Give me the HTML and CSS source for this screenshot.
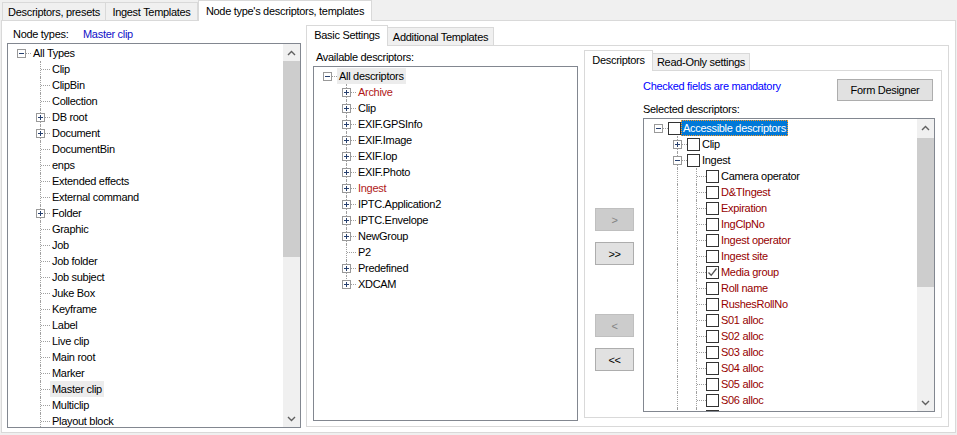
FILE: index.html
```html
<!DOCTYPE html>
<html>
<head>
<meta charset="utf-8">
<link rel="stylesheet" href="styles.css">
</head>
<body>
<div class="win">
  <div class="tabs">
    <div class="tab t1">Descriptors, presets</div>
    <div class="tab t2">Ingest Templates</div>
    <div class="tab t3 active">Node type's descriptors, templates</div>
  </div>
  <div class="page">
    <div class="left">
      <div class="nt-row"><span class="nt-lbl">Node types:</span><span class="blue">Master clip</span></div>
      <div class="tree ltree">
        <div class="tbody">
          <div class="row"><span class="c r"><svg class="ex" width="9" height="9"><rect x="0.5" y="0.5" width="8" height="8" fill="#fff" stroke="#999"/><path d="M2 4.5h5" stroke="#27406f"/></svg></span><span class="tx">All Types</span></div>
          <div class="row"><span class="c"></span><span class="c j"></span><span class="tx">Clip</span></div>
          <div class="row"><span class="c"></span><span class="c j"></span><span class="tx">ClipBin</span></div>
          <div class="row"><span class="c"></span><span class="c j"></span><span class="tx">Collection</span></div>
          <div class="row"><span class="c"></span><span class="c j"><svg class="ex" width="9" height="9"><rect x="0.5" y="0.5" width="8" height="8" fill="#fff" stroke="#999"/><path d="M2 4.5h5M4.5 2v5" stroke="#27406f"/></svg></span><span class="tx">DB root</span></div>
          <div class="row"><span class="c"></span><span class="c j"><svg class="ex" width="9" height="9"><rect x="0.5" y="0.5" width="8" height="8" fill="#fff" stroke="#999"/><path d="M2 4.5h5M4.5 2v5" stroke="#27406f"/></svg></span><span class="tx">Document</span></div>
          <div class="row"><span class="c"></span><span class="c j"></span><span class="tx">DocumentBin</span></div>
          <div class="row"><span class="c"></span><span class="c j"></span><span class="tx">enps</span></div>
          <div class="row"><span class="c"></span><span class="c j"></span><span class="tx">Extended effects</span></div>
          <div class="row"><span class="c"></span><span class="c j"></span><span class="tx">External command</span></div>
          <div class="row"><span class="c"></span><span class="c j"><svg class="ex" width="9" height="9"><rect x="0.5" y="0.5" width="8" height="8" fill="#fff" stroke="#999"/><path d="M2 4.5h5M4.5 2v5" stroke="#27406f"/></svg></span><span class="tx">Folder</span></div>
          <div class="row"><span class="c"></span><span class="c j"></span><span class="tx">Graphic</span></div>
          <div class="row"><span class="c"></span><span class="c j"></span><span class="tx">Job</span></div>
          <div class="row"><span class="c"></span><span class="c j"></span><span class="tx">Job folder</span></div>
          <div class="row"><span class="c"></span><span class="c j"></span><span class="tx">Job subject</span></div>
          <div class="row"><span class="c"></span><span class="c j"></span><span class="tx">Juke Box</span></div>
          <div class="row"><span class="c"></span><span class="c j"></span><span class="tx">Keyframe</span></div>
          <div class="row"><span class="c"></span><span class="c j"></span><span class="tx">Label</span></div>
          <div class="row"><span class="c"></span><span class="c j"></span><span class="tx">Live clip</span></div>
          <div class="row"><span class="c"></span><span class="c j"></span><span class="tx">Main root</span></div>
          <div class="row"><span class="c"></span><span class="c j"></span><span class="tx">Marker</span></div>
          <div class="row"><span class="c"></span><span class="c j"></span><span class="tx hl">Master clip</span></div>
          <div class="row"><span class="c"></span><span class="c j"></span><span class="tx">Multiclip</span></div>
          <div class="row"><span class="c"></span><span class="c j"></span><span class="tx">Playout block</span></div>
        </div>
        <div class="vs">
          <div class="ar"><svg width="9" height="6"><path d="M1 5L4.5 1.5L8 5" fill="none" stroke="#606060" stroke-width="1.4"/></svg></div>
          <div class="th lth"></div>
          <div class="sp"></div>
          <div class="ar"><svg width="9" height="6"><path d="M1 1L4.5 4.5L8 1" fill="none" stroke="#606060" stroke-width="1.4"/></svg></div>
        </div>
      </div>
    </div>

    <div class="inner">
      <div class="tabs2">
        <div class="tab2 active w-basic">Basic Settings</div>
        <div class="tab2 w-add">Additional Templates</div>
      </div>
      <div class="page2">
        <div class="mid">
          <div class="lbl2">Available descriptors:</div>
          <div class="tree mtree">
            <div class="tbody">
              <div class="row"><span class="c r"><svg class="ex" width="9" height="9"><rect x="0.5" y="0.5" width="8" height="8" fill="#fff" stroke="#999"/><path d="M2 4.5h5" stroke="#27406f"/></svg></span><span class="tx hl">All descriptors</span></div>
              <div class="row"><span class="c"></span><span class="c j"><svg class="ex" width="9" height="9"><rect x="0.5" y="0.5" width="8" height="8" fill="#fff" stroke="#999"/><path d="M2 4.5h5M4.5 2v5" stroke="#27406f"/></svg></span><span class="tx red1">Archive</span></div>
              <div class="row"><span class="c"></span><span class="c j"><svg class="ex" width="9" height="9"><rect x="0.5" y="0.5" width="8" height="8" fill="#fff" stroke="#999"/><path d="M2 4.5h5M4.5 2v5" stroke="#27406f"/></svg></span><span class="tx">Clip</span></div>
              <div class="row"><span class="c"></span><span class="c j"><svg class="ex" width="9" height="9"><rect x="0.5" y="0.5" width="8" height="8" fill="#fff" stroke="#999"/><path d="M2 4.5h5M4.5 2v5" stroke="#27406f"/></svg></span><span class="tx">EXIF.GPSInfo</span></div>
              <div class="row"><span class="c"></span><span class="c j"><svg class="ex" width="9" height="9"><rect x="0.5" y="0.5" width="8" height="8" fill="#fff" stroke="#999"/><path d="M2 4.5h5M4.5 2v5" stroke="#27406f"/></svg></span><span class="tx">EXIF.Image</span></div>
              <div class="row"><span class="c"></span><span class="c j"><svg class="ex" width="9" height="9"><rect x="0.5" y="0.5" width="8" height="8" fill="#fff" stroke="#999"/><path d="M2 4.5h5M4.5 2v5" stroke="#27406f"/></svg></span><span class="tx">EXIF.Iop</span></div>
              <div class="row"><span class="c"></span><span class="c j"><svg class="ex" width="9" height="9"><rect x="0.5" y="0.5" width="8" height="8" fill="#fff" stroke="#999"/><path d="M2 4.5h5M4.5 2v5" stroke="#27406f"/></svg></span><span class="tx">EXIF.Photo</span></div>
              <div class="row"><span class="c"></span><span class="c j"><svg class="ex" width="9" height="9"><rect x="0.5" y="0.5" width="8" height="8" fill="#fff" stroke="#999"/><path d="M2 4.5h5M4.5 2v5" stroke="#27406f"/></svg></span><span class="tx red1">Ingest</span></div>
              <div class="row"><span class="c"></span><span class="c j"><svg class="ex" width="9" height="9"><rect x="0.5" y="0.5" width="8" height="8" fill="#fff" stroke="#999"/><path d="M2 4.5h5M4.5 2v5" stroke="#27406f"/></svg></span><span class="tx">IPTC.Application2</span></div>
              <div class="row"><span class="c"></span><span class="c j"><svg class="ex" width="9" height="9"><rect x="0.5" y="0.5" width="8" height="8" fill="#fff" stroke="#999"/><path d="M2 4.5h5M4.5 2v5" stroke="#27406f"/></svg></span><span class="tx">IPTC.Envelope</span></div>
              <div class="row"><span class="c"></span><span class="c j"><svg class="ex" width="9" height="9"><rect x="0.5" y="0.5" width="8" height="8" fill="#fff" stroke="#999"/><path d="M2 4.5h5M4.5 2v5" stroke="#27406f"/></svg></span><span class="tx">NewGroup</span></div>
              <div class="row"><span class="c"></span><span class="c j"></span><span class="tx">P2</span></div>
              <div class="row"><span class="c"></span><span class="c j"><svg class="ex" width="9" height="9"><rect x="0.5" y="0.5" width="8" height="8" fill="#fff" stroke="#999"/><path d="M2 4.5h5M4.5 2v5" stroke="#27406f"/></svg></span><span class="tx">Predefined</span></div>
              <div class="row"><span class="c"></span><span class="c l"><svg class="ex" width="9" height="9"><rect x="0.5" y="0.5" width="8" height="8" fill="#fff" stroke="#999"/><path d="M2 4.5h5M4.5 2v5" stroke="#27406f"/></svg></span><span class="tx">XDCAM</span></div>
            </div>
          </div>
        </div>

        <div class="rtabs">
          <div class="tabs3">
            <div class="tab3 active w-desc">Descriptors</div>
            <div class="tab3 w-ro">Read-Only settings</div>
          </div>
          <div class="page3">
            <div class="btns">
              <div class="btn dis">&gt;</div>
              <div class="btn b2">&gt;&gt;</div>
              <div class="btn dis b3">&lt;</div>
              <div class="btn b2">&lt;&lt;</div>
            </div>
            <div class="rmain">
              <div class="rtop">
                <span class="blue2">Checked fields are mandatory</span>
                <div class="btn fd">Form Designer</div>
              </div>
              <div class="lbl3">Selected descriptors:</div>
              <div class="tree rtree">
                <div class="tbody">
                  <div class="row"><span class="c r"><svg class="ex" width="9" height="9"><rect x="0.5" y="0.5" width="8" height="8" fill="#fff" stroke="#999"/><path d="M2 4.5h5" stroke="#27406f"/></svg></span><span class="cb"></span><span class="tx sel">Accessible descriptors</span></div>
                  <div class="row"><span class="c"></span><span class="c j"><svg class="ex" width="9" height="9"><rect x="0.5" y="0.5" width="8" height="8" fill="#fff" stroke="#999"/><path d="M2 4.5h5M4.5 2v5" stroke="#27406f"/></svg></span><span class="cb"></span><span class="tx">Clip</span></div>
                  <div class="row"><span class="c"></span><span class="c j"><svg class="ex" width="9" height="9"><rect x="0.5" y="0.5" width="8" height="8" fill="#fff" stroke="#999"/><path d="M2 4.5h5" stroke="#27406f"/></svg></span><span class="cb"></span><span class="tx">Ingest</span></div>
                  <div class="row"><span class="c"></span><span class="c v"></span><span class="c j"></span><span class="cb"></span><span class="tx">Camera operator</span></div>
                  <div class="row"><span class="c"></span><span class="c v"></span><span class="c j"></span><span class="cb"></span><span class="tx red2">D&amp;TIngest</span></div>
                  <div class="row"><span class="c"></span><span class="c v"></span><span class="c j"></span><span class="cb"></span><span class="tx red2">Expiration</span></div>
                  <div class="row"><span class="c"></span><span class="c v"></span><span class="c j"></span><span class="cb"></span><span class="tx red2">IngClpNo</span></div>
                  <div class="row"><span class="c"></span><span class="c v"></span><span class="c j"></span><span class="cb"></span><span class="tx red2">Ingest operator</span></div>
                  <div class="row"><span class="c"></span><span class="c v"></span><span class="c j"></span><span class="cb"></span><span class="tx red2">Ingest site</span></div>
                  <div class="row"><span class="c"></span><span class="c v"></span><span class="c j"></span><span class="cb"><svg width="11" height="11"><path d="M1.5 5.5L4.2 8.3L9.5 1.5" fill="none" stroke="#555" stroke-width="1.3"/></svg></span><span class="tx red2">Media group</span></div>
                  <div class="row"><span class="c"></span><span class="c v"></span><span class="c j"></span><span class="cb"></span><span class="tx red2">Roll name</span></div>
                  <div class="row"><span class="c"></span><span class="c v"></span><span class="c j"></span><span class="cb"></span><span class="tx red2">RushesRollNo</span></div>
                  <div class="row"><span class="c"></span><span class="c v"></span><span class="c j"></span><span class="cb"></span><span class="tx red2">S01 alloc</span></div>
                  <div class="row"><span class="c"></span><span class="c v"></span><span class="c j"></span><span class="cb"></span><span class="tx red2">S02 alloc</span></div>
                  <div class="row"><span class="c"></span><span class="c v"></span><span class="c j"></span><span class="cb"></span><span class="tx red2">S03 alloc</span></div>
                  <div class="row"><span class="c"></span><span class="c v"></span><span class="c j"></span><span class="cb"></span><span class="tx red2">S04 alloc</span></div>
                  <div class="row"><span class="c"></span><span class="c v"></span><span class="c j"></span><span class="cb"></span><span class="tx red2">S05 alloc</span></div>
                  <div class="row"><span class="c"></span><span class="c v"></span><span class="c j"></span><span class="cb"></span><span class="tx red2">S06 alloc</span></div>
                  <div class="row"><span class="c"></span><span class="c v"></span><span class="c j"></span><span class="cb"></span></div>
                </div>
                <div class="vs">
                  <div class="ar"><svg width="9" height="6"><path d="M1 5L4.5 1.5L8 5" fill="none" stroke="#606060" stroke-width="1.4"/></svg></div>
                  <div class="th rth"></div>
                  <div class="sp"></div>
                  <div class="ar"><svg width="9" height="6"><path d="M1 1L4.5 4.5L8 1" fill="none" stroke="#606060" stroke-width="1.4"/></svg></div>
                </div>
              </div>
            </div>
          </div>
        </div>
      </div>
    </div>
  </div>
</div>
</body>
</html>
```

FILE: styles.css
```css
* { box-sizing: border-box; }
body {
  margin: 0;
  background: #f0f0f0;
  font-family: "Liberation Sans", Arial, sans-serif;
  font-size: 11px;
  letter-spacing: -0.3px;
  color: #000;
}
.win { width: 957px; height: 435px; overflow: hidden; }

/* outer tabs */
.tabs { display: flex; align-items: flex-end; height: 20px; padding-left: 2px; }
.tab {
  height: 18px;
  border: 1px solid #d9d9d9;
  border-bottom: none;
  background: #f0f0f0;
  display: flex;
  align-items: center;
  justify-content: center;
  white-space: nowrap;
}
.tab + .tab { border-left: none; }
.tab.active {
  height: 21px;
  margin-bottom: -1px;
  background: #fff;
  border-left: 1px solid #d9d9d9;
  position: relative;
  z-index: 1;
  padding-bottom: 1px;
}
.t1 { width: 104px; }
.t2 { width: 92px; }
.t3 { width: 174px; }

.page {
  margin-left: 1px;
  width: 955px;
  height: 413px;
  border: 1px solid #d9d9d9;
  background: #fff;
  display: flex;
  align-items: flex-start;
}

/* left column */
.left { margin-left: 5px; width: 294px; }
.nt-row { display: flex; height: 16px; margin-top: 5px; line-height: 16px; padding-left: 6px; }
.nt-lbl { width: 70px; }
.blue { color: #1010c8; }
.tree { border: 1px solid #828790; background: #fff; display: flex; overflow: hidden; }
.ltree { margin-top: 1px; height: 385px; }
.tbody { flex: 1; padding-left: 4px; padding-top: 1px; overflow: hidden; }

.row { display: flex; align-items: flex-start; height: 16px; white-space: nowrap; }
.c { width: 19px; height: 16px; flex: none; position: relative; padding-left: 5px; }
.c.v::before, .c.j::before, .c.l::before {
  content: "";
  position: absolute;
  left: 9px;
  top: 0;
  height: 16px;
  border-left: 1px dotted #a0a0a0;
}
.c.l::before { height: 9px; }
.c.j::after, .c.l::after, .c.r::after {
  content: "";
  position: absolute;
  left: 10px;
  right: 0;
  top: 8px;
  border-top: 1px dotted #a0a0a0;
}
.ex { display: block; margin-top: 4px; position: relative; z-index: 1; }
.tx { padding: 0 2px; height: 16px; line-height: 16px; }
.hl { background: #ececec; }
.red1 { color: #b01818; }
.red2 { color: #960000; }

.vs { width: 17px; flex: none; background: #f0f0f0; display: flex; flex-direction: column; }
.vs .ar { height: 17px; flex: none; display: flex; align-items: center; justify-content: center; }
.vs .th { background: #cdcdcd; flex: none; }
.vs .sp { flex: 1; }
.lth { height: 196px; }
.rth { height: 149px; margin-top: 2px; }

/* inner tab control */
.inner { margin-left: 5px; margin-top: 4px; width: 643px; }
.tabs2, .tabs3 { display: flex; align-items: flex-end; height: 20px; }
.tab2, .tab3 {
  height: 18px;
  border: 1px solid #d9d9d9;
  border-bottom: none;
  background: #f0f0f0;
  display: flex;
  align-items: center;
  justify-content: center;
  white-space: nowrap;
}
.tab2 + .tab2, .tab3 + .tab3 { border-left: none; }
.tab2.active, .tab3.active {
  height: 21px;
  margin-bottom: -1px;
  background: #fff;
  position: relative;
  z-index: 1;
  padding-bottom: 2px;
}
.tab3 { height: 17px; }
.w-basic { width: 82px; }
.w-add { width: 106px; }
.w-desc { width: 69px; }
.w-ro { width: 97px; }

.page2 {
  width: 643px;
  height: 382px;
  border: 1px solid #d9d9d9;
  background: #fff;
  display: flex;
  align-items: flex-start;
}
.mid { margin-left: 6px; width: 265px; }
.lbl2 { margin-top: 3px; height: 17px; line-height: 16px; padding-left: 3px; }
.mtree { height: 355px; }

.rtabs { margin-left: 6px; margin-top: 4px; width: 358px; }
.page3 {
  width: 358px;
  height: 348px;
  border: 1px solid #d9d9d9;
  background: #fff;
  display: flex;
  align-items: flex-start;
}
.btns { margin-left: 10px; width: 39px; padding-top: 137px; display: flex; flex-direction: column; }
.btn {
  height: 23px;
  border: 1px solid #adadad;
  background: #e1e1e1;
  display: flex;
  align-items: center;
  justify-content: center;
  white-space: nowrap;
}
.btn.dis { background: #cccccc; border-color: #bfbfbf; color: #838383; }
.b2 { margin-top: 11px; }
.b3 { margin-top: 49px; }

.rmain { margin-left: 9px; width: 292px; }
.rtop { display: flex; justify-content: space-between; align-items: flex-start; margin-top: 8px; height: 22px; }
.blue2 { color: #0000ff; line-height: 14px; }
.fd { width: 96px; height: 22px; margin-right: 2px; }
.lbl3 { height: 16px; line-height: 16px; }
.rtree { margin-top: 1px; height: 294px; }
.rtree .tbody { padding-left: 5px; padding-top: 1px; }
.cb {
  width: 13px;
  height: 13px;
  margin-top: 2px;
  border: 1px solid #333;
  background: #fff;
  flex: none;
  display: flex;
  align-items: center;
  justify-content: center;
}
.sel {
  background: #0078d7;
  color: #fff;
  outline: 1px dotted #ff9a1f;
  outline-offset: -1px;
}
```
